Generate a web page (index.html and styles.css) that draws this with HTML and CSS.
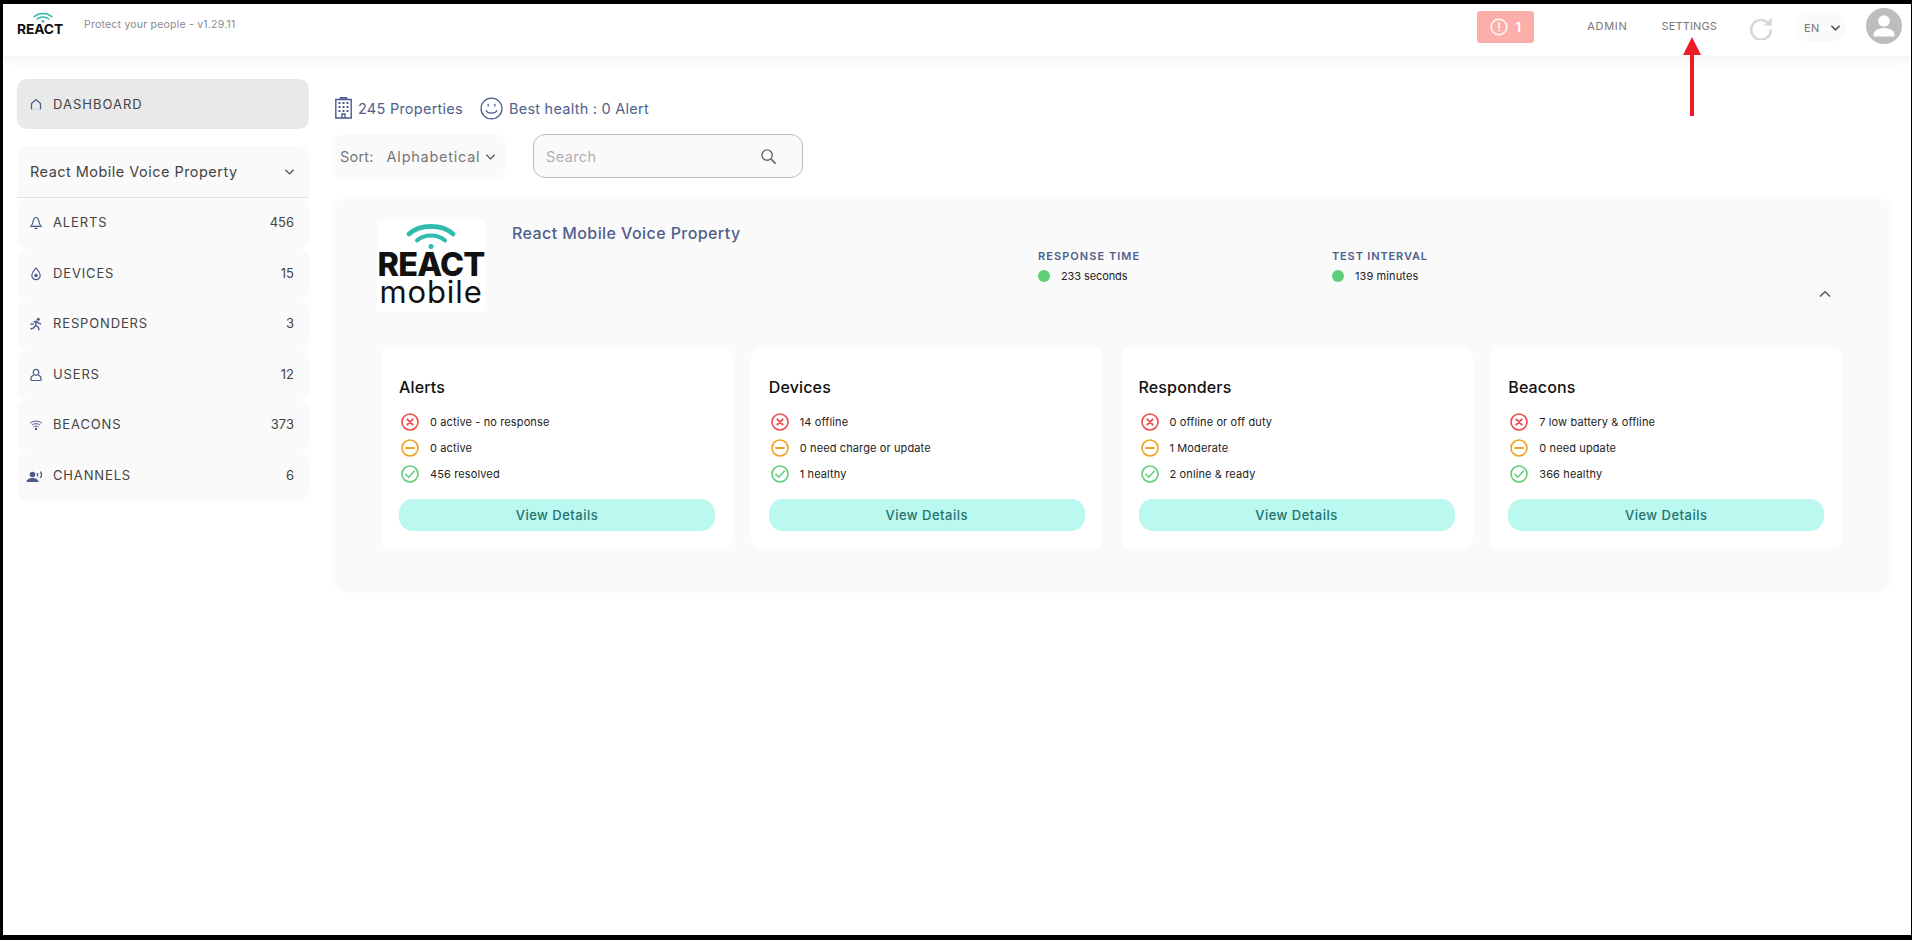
FILE: index.html
```html
<!DOCTYPE html>
<html lang="en">
<head>
<meta charset="utf-8">
<title>React Mobile Dashboard</title>
<link rel="stylesheet" href="styles.css">
</head>
<body>
<svg class="defs" width="0" height="0" aria-hidden="true">
  <symbol id="i-bad" viewBox="0 0 18 18"><circle cx="9" cy="9" r="8" fill="none" stroke="#f04b4b" stroke-width="1.6"/><path d="M6.300 6.300l5.400 5.400M11.700 6.300l-5.400 5.400" stroke="#f04b4b" stroke-width="1.900" stroke-linecap="round"/></symbol>
  <symbol id="i-warn" viewBox="0 0 18 18"><circle cx="9" cy="9" r="8" fill="none" stroke="#f0a01e" stroke-width="1.6"/><path d="M5 9h8" stroke="#f0a01e" stroke-width="1.800" stroke-linecap="round"/></symbol>
  <symbol id="i-ok" viewBox="0 0 18 18"><circle cx="9" cy="9" r="8" fill="none" stroke="#5fce78" stroke-width="1.6"/><path d="M4.800 9.200l3 3 5.600-6.200" fill="none" stroke="#5fce78" stroke-width="1.500" stroke-linecap="round" stroke-linejoin="round"/></symbol>
</svg>
<div class="app">
  <header class="topbar">
    <div class="brand">
      <svg class="brand-wifi" viewBox="0 0 20 11" aria-hidden="true"><g fill="none" stroke="#2dbcae" stroke-linecap="round"><path d="M1.200 4.600C6 .4 14 .4 18.800 4.600" stroke-width="1.600"/><path d="M4.200 7C7.500 4.200 12.500 4.200 15.800 7" stroke-width="1.500"/></g><circle cx="10" cy="9.300" r="1.300" fill="#2dbcae"/></svg>
      <span class="brand-name">REACT</span>
    </div>
    <span class="tagline">Protect your people - v1.29.11</span>
    <div class="alert-pill">
      <svg class="alert-icon" viewBox="0 0 18 18" aria-hidden="true"><circle cx="9" cy="9" r="7.800" fill="none" stroke="#fff" stroke-width="1.400"/><path d="M9 4.800v5" stroke="#fff" stroke-width="1.700" stroke-linecap="round"/><circle cx="9" cy="12.800" r="1" fill="#fff"/></svg>
      <span>1</span>
    </div>
    <nav class="topnav">
      <a class="topnav-admin">ADMIN</a>
      <a class="topnav-settings">SETTINGS</a>
    </nav>
    <svg class="refresh" viewBox="0 0 24 24" aria-hidden="true"><path d="M19.500 7.500A9.800 9.800 0 1 0 21.800 13.500" fill="none" stroke="#d8d8d8" stroke-width="2.600"/><path d="M14.500 9.500L22.800 1.600V9.500z" fill="#d8d8d8"/></svg>
    <div class="lang"><span>EN</span><svg class="chev" viewBox="0 0 12 8" aria-hidden="true"><path d="M1.500 1.500L6 6l4.500-4.500" fill="none" stroke="#555" stroke-width="1.700"/></svg></div>
    <svg class="avatar" viewBox="0 0 36 36" aria-hidden="true"><circle cx="18" cy="18" r="18" fill="#bdbdbd"/><circle cx="18" cy="13" r="5.800" fill="#fff"/><path d="M7.500 27c0-5 6-7 10.500-7s10.500 2 10.500 7v1.500h-21z" fill="#fff"/></svg>
  </header>

  <div class="content">
    <aside class="sidebar">
      <a class="nav-dash">
        <svg class="nav-icon" viewBox="0 0 14 14" aria-hidden="true"><path d="M2.500 12.500V6.500L7 2.500l4.500 4v6" fill="none" stroke="#4a5b8c" stroke-width="1.300"/><path d="M2.500 12.300h9" stroke="#c6cbdc" stroke-width=".8"/></svg>
        <span>DASHBOARD</span>
      </a>
      <div class="prop-select">
        <span>React Mobile Voice Property</span>
        <svg class="chev" viewBox="0 0 12 8" aria-hidden="true"><path d="M1.500 1.500L6 6l4.500-4.500" fill="none" stroke="#555" stroke-width="1.400"/></svg>
      </div>
      <ul class="nav-list">
        <li class="nav-item">
          <svg class="nav-icon" viewBox="0 0 14 14" aria-hidden="true"><path d="M7 1.500C4.800 1.500 4.300 3.500 4 6c-.2 1.700-1 3-2 4.300h10C11 9 10.200 7.700 10 6 9.700 3.500 9.200 1.500 7 1.500zM5.500 12.300h3" fill="none" stroke="#4a5b8c" stroke-width="1.200"/></svg>
          <span class="nav-label">ALERTS</span><span class="nav-count">456</span>
        </li>
        <li class="nav-item">
          <svg class="nav-icon" viewBox="0 0 14 14" aria-hidden="true"><path d="M7 1c1.500 2 4.200 4 4.200 7.500a4.200 4.200 0 0 1-8.400 0C2.800 5 5.500 3 7 1z" fill="none" stroke="#4a5b8c" stroke-width="1.200"/><circle cx="7" cy="8.500" r="1.700" fill="#4a5b8c"/></svg>
          <span class="nav-label">DEVICES</span><span class="nav-count">15</span>
        </li>
        <li class="nav-item">
          <svg class="nav-icon" viewBox="0 0 14 14" aria-hidden="true"><circle cx="9.300" cy="2.300" r="1.500" fill="#4a5b8c"/><path d="M4.500 5l3-.8 2.200 2 2.300.8M7.500 4.500L6.500 8.500l2.800 1.700.8 3M6.200 8.800L4.800 11 1.500 12M1.500 7.300l3-.3" fill="none" stroke="#4a5b8c" stroke-width="1.400"/></svg>
          <span class="nav-label">RESPONDERS</span><span class="nav-count">3</span>
        </li>
        <li class="nav-item">
          <svg class="nav-icon" viewBox="0 0 14 14" aria-hidden="true"><ellipse cx="7" cy="4.300" rx="2.800" ry="3" fill="none" stroke="#4a5b8c" stroke-width="1.200"/><path d="M4.800 7c-2 .8-3 2.500-3 4.200 0 .9.500 1.300 1.300 1.300h7.800c.8 0 1.300-.4 1.300-1.300 0-1.700-1-3.400-3-4.200" fill="none" stroke="#4a5b8c" stroke-width="1.200"/></svg>
          <span class="nav-label">USERS</span><span class="nav-count">12</span>
        </li>
        <li class="nav-item">
          <svg class="nav-icon" viewBox="0 0 14 14" aria-hidden="true"><g fill="none" stroke="#4a5b8c" stroke-width="1"><path d="M1 5.300c3.400-2.800 8.600-2.800 12 0M2.800 7.200c2.400-2 6-2 8.400 0M4.500 9c1.500-1.200 3.500-1.200 5 0"/></g><circle cx="7" cy="11" r="1.200" fill="#4a5b8c"/></svg>
          <span class="nav-label">BEACONS</span><span class="nav-count">373</span>
        </li>
        <li class="nav-item">
          <svg class="nav-icon nav-icon-wide" viewBox="0 0 18 14" aria-hidden="true"><circle cx="6.500" cy="5.500" r="2.800" fill="#4a5b8c"/><path d="M.5 13c0-2.500 3-4 6-4s6 1.500 6 4z" fill="#4a5b8c"/><path d="M11.500 4v3.500" stroke="#4a5b8c" stroke-width="1.300"/><path d="M14.500 2.500c1.200 2 1.200 4.500 0 6.500" fill="none" stroke="#4a5b8c" stroke-width="1.300"/></svg>
          <span class="nav-label">CHANNELS</span><span class="nav-count">6</span>
        </li>
      </ul>
    </aside>

    <main class="main">
      <div class="stats">
        <svg class="stat-building" viewBox="0 0 17 22" aria-hidden="true"><path d="M.8 21V2.500h15.400V21zM5.500 2.500V.8h6v1.700M7 21v-4h3v4" fill="none" stroke="#4a5b8c" stroke-width="1.400"/><g fill="#4a5b8c"><rect x="3.500" y="5" width="2" height="2"/><rect x="7.500" y="5" width="2" height="2"/><rect x="11.500" y="5" width="2" height="2"/><rect x="3.500" y="9" width="2" height="2"/><rect x="7.500" y="9" width="2" height="2"/><rect x="11.500" y="9" width="2" height="2"/><rect x="3.500" y="13" width="2" height="2"/><rect x="7.500" y="13" width="2" height="2"/><rect x="11.500" y="13" width="2" height="2"/></g></svg>
        <span class="stat-text">245 Properties</span>
        <svg class="stat-smile" viewBox="0 0 22 22" aria-hidden="true"><circle cx="11" cy="11" r="10" fill="none" stroke="#4a5b8c" stroke-width="1.200"/><path d="M5.800 12.500c1 3.800 9.400 3.800 10.400 0" fill="none" stroke="#4a5b8c" stroke-width="1.200"/><path d="M7.800 6.500v2.500M14.200 6.500v2.500" stroke="#4a5b8c" stroke-width="1.200"/></svg>
        <span class="stat-text">Best health : 0 Alert</span>
      </div>
      <div class="filters">
        <div class="sort">
          <span class="sort-label">Sort:</span>
          <span class="sort-value">Alphabetical</span>
          <svg class="chev" viewBox="0 0 12 8" aria-hidden="true"><path d="M1.500 1.500L6 6l4.500-4.500" fill="none" stroke="#555" stroke-width="1.400"/></svg>
        </div>
        <div class="search">
          <span class="search-text">Search</span>
          <svg class="search-icon" viewBox="0 0 18 18" aria-hidden="true"><circle cx="7.500" cy="7.500" r="5.500" fill="none" stroke="#666" stroke-width="1.500"/><path d="M11.500 11.500l5 5" stroke="#666" stroke-width="1.700"/></svg>
        </div>
      </div>

      <section class="property">
        <div class="prop-head">
          <div class="prop-logo">
            <svg class="prop-wifi" viewBox="0 0 50 27" aria-hidden="true"><g fill="none" stroke="#2dbcae" stroke-linecap="round"><path d="M3 11C14 .8 36 .8 47 11" stroke-width="4.600"/><path d="M11 17.500C18.500 10.800 31.500 10.800 39 17.500" stroke-width="4"/></g><circle cx="25" cy="23.500" r="2.500" fill="#2dbcae"/></svg>
            <span class="prop-logo-react">REACT</span>
            <span class="prop-logo-mobile">mobile</span>
          </div>
          <h1 class="prop-title">React Mobile Voice Property</h1>
          <div class="metric metric-response">
            <div class="metric-label">RESPONSE TIME</div>
            <div class="metric-value"><i class="dot"></i>233 seconds</div>
          </div>
          <div class="metric metric-test">
            <div class="metric-label">TEST INTERVAL</div>
            <div class="metric-value"><i class="dot"></i>139 minutes</div>
          </div>
          <svg class="collapse" viewBox="0 0 12 8" aria-hidden="true"><path d="M1 6.500L6 1.800l5 4.700" fill="none" stroke="#555" stroke-width="1.500"/></svg>
        </div>

        <div class="cards">
          <article class="card">
            <h2 class="card-title">Alerts</h2>
            <div class="row"><svg class="row-icon"><use href="#i-bad"/></svg>0 active - no response</div>
            <div class="row"><svg class="row-icon"><use href="#i-warn"/></svg>0 active</div>
            <div class="row"><svg class="row-icon"><use href="#i-ok"/></svg>456 resolved</div>
            <a class="btn">View Details</a>
          </article>
          <article class="card">
            <h2 class="card-title">Devices</h2>
            <div class="row"><svg class="row-icon"><use href="#i-bad"/></svg>14 offline</div>
            <div class="row"><svg class="row-icon"><use href="#i-warn"/></svg>0 need charge or update</div>
            <div class="row"><svg class="row-icon"><use href="#i-ok"/></svg>1 healthy</div>
            <a class="btn">View Details</a>
          </article>
          <article class="card">
            <h2 class="card-title">Responders</h2>
            <div class="row"><svg class="row-icon"><use href="#i-bad"/></svg>0 offline or off duty</div>
            <div class="row"><svg class="row-icon"><use href="#i-warn"/></svg>1 Moderate</div>
            <div class="row"><svg class="row-icon"><use href="#i-ok"/></svg>2 online &amp; ready</div>
            <a class="btn">View Details</a>
          </article>
          <article class="card">
            <h2 class="card-title">Beacons</h2>
            <div class="row"><svg class="row-icon"><use href="#i-bad"/></svg>7 low battery &amp; offline</div>
            <div class="row"><svg class="row-icon"><use href="#i-warn"/></svg>0 need update</div>
            <div class="row"><svg class="row-icon"><use href="#i-ok"/></svg>366 healthy</div>
            <a class="btn">View Details</a>
          </article>
        </div>
      </section>
    </main>
  </div>
  <svg class="annotation" viewBox="0 0 20 80" aria-hidden="true"><path d="M10 0L19 18H12V79H8V18H1z" fill="#ec1c24"/></svg>
</div>
</body>
</html>
```
FILE: styles.css
```css
* { box-sizing: border-box; }
html, body { margin: 0; height: 100%; }
body {
  background: #000;
  padding: 4px 1px 5px 3px;
  font-family: Inter, "Liberation Sans", sans-serif;
  color: #444;
  overflow: hidden;
}
.defs { position: absolute; }
.app { position: relative; background: #fff; height: 931px; }

/* top bar */
.topbar {
  display: flex;
  align-items: center;
  height: 52px;
  background: #fff;
  box-shadow: 0 2px 12px rgba(0, 0, 0, .08);
  position: relative;
}
.brand {
  display: flex;
  flex-direction: column;
  align-items: center;
  width: 46px;
  margin-left: 14px;
  margin-top: -13px;
}
.brand-wifi { width: 20px; height: 11px; margin-left: 6px; }
.brand-name { font-size: 13.8px; font-weight: 700; line-height: 12px; color: #111; letter-spacing: -.1px; }
.tagline { margin-left: 21px; margin-top: -12px; font-size: 10.5px; color: #8a8a8a; letter-spacing: .22px; }
.alert-pill {
  display: flex;
  align-items: center;
  justify-content: center;
  gap: 7px;
  margin-left: auto;
  margin-right: 53px;
  width: 57px;
  height: 32px;
  margin-top: -6px;
  background: #fcaea8;
  border-radius: 3px;
  color: #fff;
  font-size: 13px;
  font-weight: 600;
}
.alert-icon { width: 18px; height: 18px; }
.topnav { display: flex; gap: 34px; margin-top: -8px; font-size: 11px; color: #777; letter-spacing: .15px; }
.topnav-admin { letter-spacing: .7px; }
.refresh { width: 24px; height: 24px; margin-left: 32px; margin-top: -5px; }
.lang {
  display: flex;
  align-items: center;
  justify-content: space-between;
  width: 50px;
  height: 29px;
  margin-left: 23px;
  margin-top: -5px;
  padding: 0 5px 0 8px;
  background: #fafafa;
  border-radius: 15px;
  font-size: 11px;
  letter-spacing: .5px;
  color: #777;
}
.chev { width: 11px; height: 8px; flex: none; }
.avatar { width: 36px; height: 36px; margin-left: 20px; margin-right: 9px; margin-top: -8px; }

/* page */
.content { display: flex; padding: 23px 19px 0 14px; }
.sidebar { width: 292px; flex: none; }
.nav-dash {
  display: flex;
  align-items: center;
  gap: 10px;
  height: 50px;
  padding-left: 12px;
  background: #e9e9e9;
  border-radius: 10px;
  font-size: 13px;
  color: #444;
  letter-spacing: 1px;
}
.nav-icon { width: 14px; height: 14px; flex: none; }
.nav-icon-wide { width: 18px; margin-left: -3px; margin-right: -1px; }
.prop-select {
  display: flex;
  align-items: center;
  justify-content: space-between;
  height: 52px;
  margin-top: 17px;
  padding: 0 14px 0 13px;
  background: #fafafa;
  border-bottom: 1px solid #e2e2e2;
  border-radius: 10px 10px 0 0;
  font-size: 14.5px;
  color: #444;
  letter-spacing: .47px;
}
.nav-list { list-style: none; margin: 0; padding: 0; }
.nav-item {
  display: flex;
  align-items: center;
  gap: 10px;
  height: 50.5px;
  padding: 0 15px 0 12px;
  background: #fafafa;
  border-radius: 10px;
  font-size: 13px;
  letter-spacing: .85px;
}
.nav-label { flex: 1; padding-bottom: 2px; }
.nav-count { letter-spacing: 0; padding-bottom: 2px; }

.main { flex: 1; margin-left: 23px; min-width: 0; }
.stats { display: flex; align-items: center; height: 30px; margin-top: 14px; padding-left: 3px; }
.stat-building { width: 17px; height: 22px; }
.stat-smile { width: 23px; height: 23px; margin-left: 17px; }
.stat-text { margin-left: 6px; font-size: 14.5px; color: #4f5f8e; letter-spacing: .25px; }
.filters { display: flex; gap: 27px; margin-top: 11px; }
.sort {
  display: flex;
  align-items: center;
  width: 174px;
  height: 45px;
  padding: 0 10px 0 8px;
  background: #fafafa;
  border-radius: 12px;
  font-size: 14.5px;
}
.sort-label { color: #777; letter-spacing: .2px; }
.sort-value { flex: 1; margin-left: 13px; color: #777; letter-spacing: .75px; }
.search {
  display: flex;
  align-items: center;
  justify-content: space-between;
  width: 270px;
  height: 44px;
  padding: 0 25px 0 12px;
  background: #fafafa;
  border: 1px solid #bbb;
  border-radius: 12px;
}
.search-text { font-size: 14.5px; color: #b0b0b0; letter-spacing: .4px; }
.search-icon { width: 17px; height: 17px; }

.property {
  height: 396px;
  margin-top: 18px;
  padding: 23px 50px 0 45px;
  background: #fafafa;
  border-radius: 16px;
}
.prop-head { display: flex; align-items: flex-start; height: 127px; position: relative; }
.prop-logo {
  display: flex;
  flex-direction: column;
  align-items: center;
  flex: none;
  width: 108px;
  height: 91px;
  padding-top: 3px;
  background: #fff;
}
.prop-wifi { width: 50px; height: 27px; flex: none; }
.prop-logo-react { font-size: 32.5px; font-weight: 800; line-height: 26px; margin-top: 2px; color: #111; letter-spacing: -.8px; }
.prop-logo-mobile { font-size: 31px; font-weight: 400; line-height: 27px; color: #111; letter-spacing: .9px; }
.prop-title {
  flex: none;
  width: 526px;
  margin: 3px 0 0 27px;
  font-size: 16px;
  line-height: 20px;
  font-weight: 500;
  color: #4f5f8e;
  letter-spacing: .42px;
}
.metric { margin-top: 29px; flex: none; width: 294px; }
.metric-label { font-size: 11px; line-height: 14px; font-weight: 600; color: #4f5f8e; letter-spacing: 1.05px; }
.metric-test .metric-label { letter-spacing: .85px; }
.metric-value { display: flex; align-items: center; margin-top: 6px; font-size: 11px; line-height: 14px; color: #222; letter-spacing: -.1px; }
.metric-test .metric-value { letter-spacing: .1px; }
.dot { width: 12px; height: 12px; margin-right: 11px; border-radius: 50%; background: #5fce78; }
.collapse { position: absolute; right: 11px; top: 70px; width: 12px; height: 8px; }

.cards { display: grid; grid-template-columns: repeat(4, 352px); column-gap: 17.75px; margin-left: 4px; }
.card { height: 202px; padding: 30px 18px 0; background: #fff; border-radius: 10px; }
.card-title { margin: 0 0 12px; font-size: 16px; line-height: 20px; font-weight: 500; color: #111; letter-spacing: .15px; }
.row { display: flex; align-items: center; height: 26px; padding-left: 2px; font-size: 11px; color: #222; letter-spacing: .12px; }
.row-icon { width: 18px; height: 18px; margin-right: 11px; flex: none; }
.btn {
  display: flex;
  align-items: center;
  justify-content: center;
  height: 32px;
  margin-top: 12px;
  background: #baf8f0;
  border-radius: 14px;
  font-size: 13px;
  font-weight: 500;
  color: #23736f;
  letter-spacing: .5px;
}

.annotation { position: absolute; left: 1679px; top: 33px; width: 20px; height: 80px; }
```
